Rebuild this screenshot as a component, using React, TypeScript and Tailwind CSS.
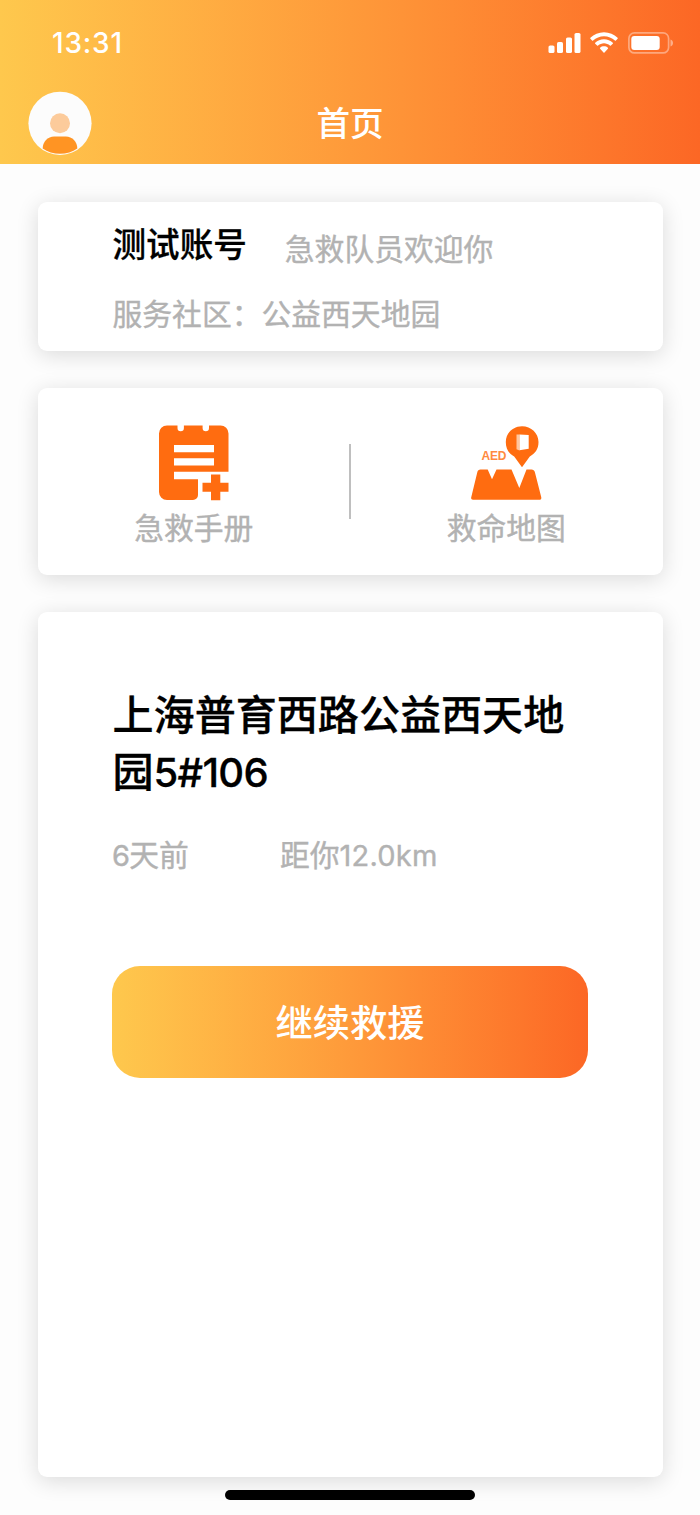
import type { ReactNode } from "react";

function SignalIcon() {
  return (
    <svg width="33" height="22" viewBox="0 0 33 22" fill="#fff">
      <rect x="0.5" y="13.5" width="6" height="7.500" rx="1.600" />
      <rect x="9" y="10" width="6" height="11" rx="1.600" />
      <rect x="18" y="5.500" width="6" height="15.500" rx="1.600" />
      <rect x="26.500" y="1" width="6" height="20" rx="1.600" />
    </svg>
  );
}

function WifiIcon() {
  return (
    <svg width="28" height="22" viewBox="0 0 28 22" fill="#fff">
      <path d="M14 0.300C8.700 0.300 3.900 2.400 0.400 5.800c-.3.300-.3.700 0 1l1.700 1.800c.3.300.7.300 1 0C6 5.900 9.800 4.300 14 4.300s8 1.600 10.900 4.300c.3.300.7.300 1 0l1.700-1.800c.3-.3.3-.7 0-1C24.100 2.400 19.300.3 14 .3z" />
      <path d="M14 7.300c-3.400 0-6.500 1.300-8.800 3.400-.3.300-.3.700 0 1l1.900 1.900c.3.300.7.300 1 0C9.700 12.200 11.800 11.300 14 11.300s4.300.9 5.900 2.300c.3.300.7.300 1 0l1.900-1.900c.3-.3.3-.7 0-1-2.300-2.100-5.400-3.400-8.800-3.400z" />
      <path d="M14 14.300c-1.500 0-2.800.5-3.900 1.400-.3.300-.3.700 0 1l3.400 3.700c.3.300.7.300 1 0l3.400-3.700c.3-.3.3-.7 0-1-1.100-.9-2.400-1.400-3.900-1.400z" />
    </svg>
  );
}

function BatteryIcon() {
  return (
    <svg width="46" height="22" viewBox="0 0 46 22" fill="none">
      <rect x="0.900" y="0.900" width="39.700" height="20" rx="5.500" stroke="#fff" strokeOpacity="0.4" strokeWidth="1.700" />
      <rect x="3.300" y="4" width="28.400" height="14" rx="3" fill="#fff" />
      <path d="M42.500 7.500c1.500.5 2.500 1.900 2.500 3.500s-1 3-2.500 3.500z" fill="#fff" fillOpacity="0.450" />
    </svg>
  );
}

function Avatar() {
  return (
    <svg width="64" height="64" viewBox="0 0 64 64">
      <circle cx="32" cy="32.300" r="31.600" fill="#fcfcfc" />
      <circle cx="32" cy="32.300" r="10" fill="#fccb9b" />
      <path d="M14.700 57.500c0-6.600 5-12 11.500-12h11.600c6.500 0 11.500 5.400 11.500 12C44.500 61.100 38.500 62.700 32 62.700S19.500 61.100 14.700 57.500z" fill="#ff9423" />
    </svg>
  );
}

function ManualIcon() {
  return (
    <svg width="72" height="76" viewBox="0 0 72 76" fill="#ff6c10">
      <path d="M9 0.500h10.500v2.500a3.200 3.200 0 0 0 6.400 0V.5h18.700v2.500a3.200 3.200 0 0 0 6.400 0V.5h11.500a8 8 0 0 1 8 8V46.700H16v7.500h24V70a5 5 0 0 1-5 5H9a8 8 0 0 1-8-8V8.500a8 8 0 0 1 8-8z" />
      <path d="M16 20h40v7.200H16zM16 33.300h40v7.200H16z" fill="#fff" />
      <path d="M53 49.500h9.300v8.300h8.200v9h-8.200v8.500H53v-8.500h-8.500v-9H53z" />
    </svg>
  );
}

function MapIcon() {
  return (
    <svg width="72" height="76" viewBox="0 0 72 76" fill="#ff6c10">
      <path d="M52 1.200c9.200 0 16.500 7 16.500 15.800 0 7.500-3.600 11.600-8.700 14.500L52 42.300 44.200 31.500c-5.100-2.900-8.400-7-8.400-14.500C35.800 8.200 42.900 1.200 52 1.200z" />
      <path d="M46.500 9.500h3v16l-3-1.200z" fill="#ffc6a0" />
      <path d="M49.500 9.500l9.200.5v13.700l-9.200 1.600z" fill="#fff" />
      <path d="M10.500 44.500h7.200l4.300 9.700 4.500-9.700H41.500L49.300 63 56.500 44.500H61.500c1.700 0 2.900.9 3.400 2.700L71.200 72c.4 1.700-.2 2.700-1.700 2.700H3c-1.500 0-2.200-1-1.700-2.700L7.300 47.200c.4-1.800 1.500-2.700 3.200-2.700z" />
      <text x="11.500" y="35.300" fontFamily="Liberation Sans, sans-serif" fontSize="12" fontWeight="700" fill="#ff8a40" textLength="25">
        AED
      </text>
    </svg>
  );
}

function Card({ className, children }: { className: string; children: ReactNode }) {
  return (
    <section className={`rounded-[9px] bg-white shadow-[0_4px_22px_rgba(0,0,0,0.14)] ${className}`}>
      {children}
    </section>
  );
}

function Shortcut({ icon, label }: { icon: ReactNode; label: string }) {
  return (
    <button className="flex flex-1 flex-col items-center pt-[37px]">
      {icon}
      <span className="mt-[5px] text-[29.8px] leading-[44px] text-[#b2b2b2] [-webkit-text-stroke:0.4px_#b2b2b2]">{label}</span>
    </button>
  );
}

export default function App() {
  return (
    <div className="flex h-[1515px] w-[700px] flex-col bg-[#fdfdfd] font-['Inter','Noto_Sans_CJK_SC',sans-serif] text-black">
      <header className="h-[164px] shrink-0 bg-linear-to-r from-[#fec84d] via-[#fe9a3a] to-[#fc6725] text-white">
        <div className="flex h-[86px] items-center justify-between pr-[26px] pl-[52px]">
          <time className="text-[28px] font-medium tracking-[0.8px]">13:31</time>
          <div className="flex items-center gap-[9px]">
            <div className="flex gap-[9px] pr-[1px]">
              <SignalIcon />
              <WifiIcon />
            </div>
            <BatteryIcon />
          </div>
        </div>
        <div className="grid h-[74px] grid-cols-[64px_1fr_64px] items-center px-[28px]">
          <Avatar />
          <h1 className="pt-[2px] text-center text-[33.6px] leading-[48px] font-medium">首页</h1>
        </div>
      </header>

      <main className="flex flex-col px-[37.5px] pt-[37.5px]">
        <Card className="h-[149px] px-[75px] pt-[19px]">
          <div className="flex items-start">
            <h2 className="text-[33.6px] leading-[48px] font-medium [-webkit-text-stroke:0.3px_#000]">测试账号</h2>
            <p className="ml-[38px] pt-[6px] text-[29.8px] leading-[44px] text-[#b2b2b2] [-webkit-text-stroke:0.4px_#b2b2b2]">急救队员欢迎你</p>
          </div>
          <p className="mt-[21px] text-[29.8px] leading-[44px] text-[#b2b2b2] [-webkit-text-stroke:0.4px_#b2b2b2]">服务社区：公益西天地园</p>
        </Card>

        <Card className="mt-[37.5px] flex h-[186.5px] px-[1px]">
          <Shortcut icon={<ManualIcon />} label="急救手册" />
          <div className="mt-[56px] h-[75px] w-[2px] shrink-0 bg-[#bfbfbf]" />
          <Shortcut icon={<MapIcon />} label="救命地图" />
        </Card>

        <Card className="mt-[37.5px] h-[865px] px-[74.5px] pt-[75px]">
          <h2 className="h-[114px] pl-[0.5px] text-[41.07px] leading-[57px] font-medium [-webkit-text-stroke:0.3px_#000]">
            <span className="block">上海普育西路公益西天地</span>
            <span className="block">
              园<span className="text-[40px] tracking-[-0.7px]">5#106</span>
            </span>
          </h2>
          <div className="mt-[32px] flex h-[44px] text-[29.8px] leading-[44px] text-[#b2b2b2] [-webkit-text-stroke:0.4px_#b2b2b2]">
            <span className="w-[168px]">
              <span className="text-[29px] tracking-[-0.7px]">6</span>天前
            </span>
            <span>
              距你<span className="text-[29px] tracking-[0.2px]">12.0km</span>
            </span>
          </div>
          <button className="mt-[89px] h-[112px] w-full rounded-[28px] bg-linear-to-r from-[#fec84d] via-[#fe9a3a] to-[#fc6725] pt-[3px] text-[37.3px] font-medium text-white">
            继续救援
          </button>
        </Card>
      </main>

      <div className="mx-auto mt-[13px] h-[10px] w-[250px] shrink-0 rounded-full bg-black" />
    </div>
  );
}
